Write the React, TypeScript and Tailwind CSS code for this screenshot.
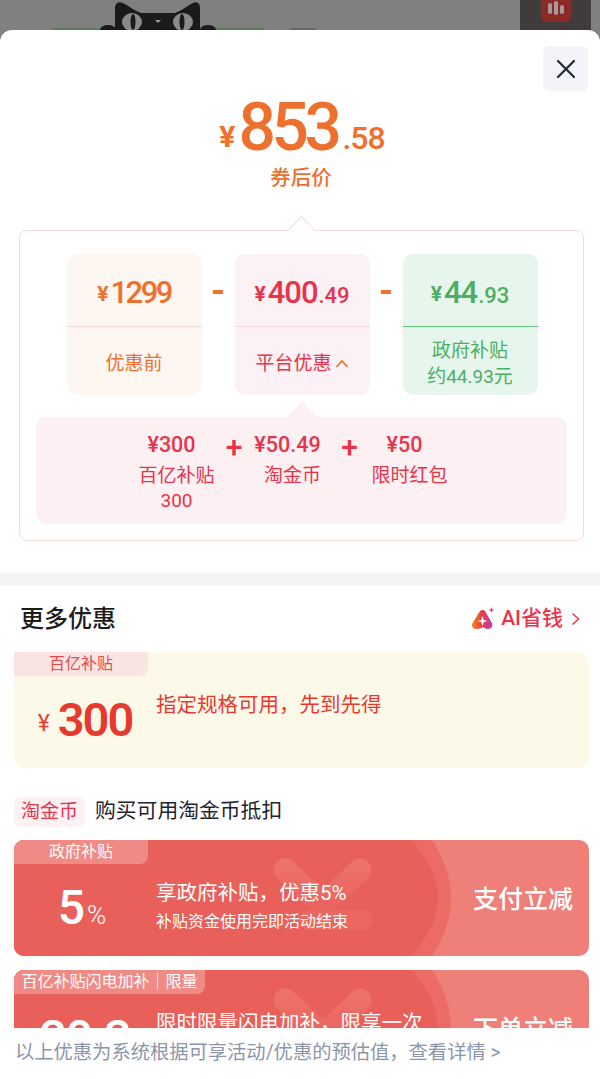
import React from "react";

const cjk = "font-['Roboto','Noto_Sans_CJK_SC',sans-serif]";

const Cat = () => (
  <svg className="absolute left-[100px] top-0" width="116" height="30" viewBox="0 0 116 30">
    <path d="M15 30V8C15 3 19 1 23 3C29 6 35 11 41 13H75C81 11 87 6 93 3C97 1 100 3 100 8V30Z" fill="#1a1a1a" />
    <ellipse cx="8" cy="30" rx="8" ry="5" fill="#1a1a1a" />
    <ellipse cx="108" cy="30" rx="8" ry="5" fill="#1a1a1a" />
    <ellipse cx="32" cy="22" rx="10" ry="9" fill="#8a8a8a" />
    <ellipse cx="83" cy="22" rx="10" ry="9" fill="#8a8a8a" />
    <ellipse cx="33" cy="22" rx="2.5" ry="8" fill="#1a1a1a" />
    <ellipse cx="82" cy="22" rx="2.5" ry="8" fill="#1a1a1a" />
    <path d="M55 20H61L58 23Z" fill="#999" />
  </svg>
);

const PriceCard = ({
  bg,
  line,
  color,
  int,
  dec,
  children,
}: {
  bg: string;
  line: string;
  color: string;
  int: string;
  dec?: string;
  children: React.ReactNode;
}) => (
  <div className={`w-[135px] h-[141px] rounded-[10px] flex flex-col ${bg} ${color}`}>
    <div className={`h-[73px] shrink-0 border-b flex items-center justify-center pt-[6px] ${line}`}>
      <span className="text-[21px] font-bold mr-[2px] mt-[4px]">¥</span>
      <span className={`text-[31px] font-medium ${dec ? "tracking-[-1px]" : "tracking-[-2.5px]"}`}>{int}</span>
      {dec && <span className="text-[22px] font-medium mt-[4px] ml-px">{dec}</span>}
    </div>
    <div className="flex-1 flex flex-col items-center justify-center text-[19px] leading-[26px] pt-[5px]">{children}</div>
  </div>
);

const Sub = ({ price, label, sub, w }: { price: string; label: string; sub?: string; w: string }) => (
  <div className={`flex flex-col items-center ${w}`}>
    <span className="text-[21.5px] font-medium leading-[26px] pr-[10px]">¥{price}</span>
    <span className="text-[19px] leading-[28px] mt-[4px]">{label}</span>
    {sub && <span className="text-[19px] leading-[21px]">{sub}</span>}
  </div>
);

const Dash = () => <div className="w-[33px] text-center text-[36px] font-bold text-[#ee702e] leading-[74px]">-</div>;

const Watermark = () => (
  <svg className="absolute left-0 top-0 pointer-events-none" width="575" height="116" viewBox="0 0 575 116">
    <defs>
      <linearGradient id="wm" gradientUnits="userSpaceOnUse" x1="0" y1="20" x2="0" y2="80">
        <stop offset="0" stopColor="#ed736b" />
        <stop offset="1" stopColor="#e9605a" />
      </linearGradient>
    </defs>
    <path d="M0 0H418Q456 58 418 116H0Z" fill="#ec6c65" />
    <path d="M0 0H397Q451 58 397 116H0Z" fill="#e9605a" />
    <path d="M271 30L309 65L346 30" fill="none" stroke="url(#wm)" strokeWidth="23" strokeLinecap="round" strokeLinejoin="round" />
    <path d="M295 80H349" fill="none" stroke="#eb6860" strokeWidth="20" strokeLinecap="round" />
  </svg>
);

const Tag = ({ children, w, cls }: { children: React.ReactNode; w: string; cls: string }) => (
  <div className={`absolute left-0 top-0 h-[24px] ${w} ${cls} rounded-br-[8px] text-[16px] leading-[24px] text-center`}>{children}</div>
);

const RedCoupon = ({
  tag,
  tagW,
  left,
  title,
  sub,
  action,
}: {
  tag: string;
  tagW: string;
  left: React.ReactNode;
  title: string;
  sub?: string;
  action: string;
}) => (
  <div className="relative h-[116px] shrink-0 rounded-[10px] overflow-hidden bg-[#ef7f79] text-white">
    <Watermark />
    <Tag w={tagW} cls="bg-[#ef8a84]">{tag}</Tag>
    <div className="relative flex h-full">
      <div className="w-[142px] shrink-0 flex items-end justify-center pb-[20px]">{left}</div>
      <div className="flex-1 pt-[39px]">
        <div className="text-[20.5px] leading-[28px]">{title}</div>
        {sub && <div className="text-[16px] leading-[24px] mt-[3px]">{sub}</div>}
      </div>
      <div className="w-[116px] shrink-0 pt-[42px] text-[25px] leading-[36px] font-medium">{action}</div>
    </div>
  </div>
);

export default function App() {
  return (
    <div className={`h-[1079px] w-[600px] overflow-hidden flex flex-col bg-[#808080] ${cjk}`}>
      {/* dimmed page behind the sheet */}
      <div className="relative h-[30px] shrink-0 flex items-end">
        <Cat />
        <div className="ml-[52px] w-[212px] h-[2px] bg-[#5c7a5c]" />
        <div className="ml-[26px] w-[26px] h-[2px] rounded-t-full bg-[#666]" />
        <div className="ml-auto mr-[9px] w-[71px] h-full bg-[#403c3c] flex justify-center">
          <div className="w-[30px] h-[22px] rounded-b-[6px] bg-[#8c2a25] flex items-start justify-center gap-[2px] pt-[1px]">
            <div className="w-[4px] h-[11px] mt-[2px] rounded-full bg-[#a99]" />
            <div className="w-[4px] h-[14px] rounded-full bg-[#a99]" />
            <div className="w-[4px] h-[9px] mt-[4px] rounded-full bg-[#a99]" />
          </div>
        </div>
      </div>

      {/* sheet */}
      <div className="flex-1 min-h-0 bg-white rounded-t-[12px] flex flex-col">
        <div className="flex-1 min-h-0 overflow-hidden">
          <div className="relative pt-[64px] flex flex-col items-center text-[#ee702e]">
            <button className="absolute right-[12px] top-[16px] w-[45px] h-[45px] rounded-[6px] bg-[#f2f4f7] flex items-center justify-center">
              <svg width="20" height="20" viewBox="0 0 20 20" fill="none" stroke="#1f2937" strokeWidth="2.2" strokeLinecap="round">
                <path d="M2 2L18 18M18 2L2 18" />
              </svg>
            </button>
            <div className="flex items-end h-[68px] leading-none pl-[4px]">
              <span className="text-[30px] font-bold mb-[3px] mr-[3px] leading-[44px]">¥</span>
              <span className="text-[66px] font-medium tracking-[-4.5px] leading-[68px]">853</span>
              <span className="text-[32px] font-medium tracking-[-1px] ml-[5px] mb-[2px] leading-[44px]">.58</span>
            </div>
            <div className="text-[20.5px] font-medium leading-[28px] mt-[2px] pl-[2px]">券后价</div>
          </div>

          {/* price breakdown */}
          <div className="relative ml-[19px] mr-[16px] mt-[38px] h-[311px] border border-[#f8dadd] rounded-[8px] px-[16px]">
            <div className="absolute left-[272px] top-[-11px] w-[19px] h-[19px] rotate-45 bg-white border-l border-t border-[#f8dadd]" />
            <div className="flex justify-center mt-[23px] pl-px">
              <PriceCard bg="bg-[#fef6f1]" line="border-[#f7d5d5]" color="text-[#ee702e]" int="1299">
                <span>优惠前</span>
              </PriceCard>
              <Dash />
              <PriceCard bg="bg-[#fcf1f5]" line="border-[#f7d5dc]" color="text-[#e8344a]" int="400" dec=".49">
                <span className="flex items-center">
                  平台优惠
                  <svg className="ml-[3px]" width="14" height="9" viewBox="0 0 14 9" fill="none" stroke="#ee702e" strokeWidth="1.6">
                    <path d="M1.5 8L7 2L12.5 8" />
                  </svg>
                </span>
              </PriceCard>
              <Dash />
              <PriceCard bg="bg-[#e7f6ec]" line="border-[#66c07a]" color="text-[#4cae62]" int="44" dec=".93">
                <span>政府补贴</span>
                <span>约44.93元</span>
              </PriceCard>
            </div>

            <div className="relative mt-[22px] h-[107px] rounded-[10px] bg-[#fdf0f3] text-[#e8344a] flex justify-center pt-[15px]">
              <div className="absolute left-[255px] top-[-11px] w-[22px] h-[22px] rotate-45 bg-[#fdf0f3]" />
              <div className="relative flex items-start ml-[-13px]">
                <Sub price="300" label="百亿补贴" sub="300" w="w-[80px]" />
                <span className="w-[35px] text-center text-[30px] leading-[30px] font-medium">+</span>
                <Sub price="50.49" label="淘金币" w="w-[82px]" />
                <span className="w-[32px] text-center text-[30px] leading-[30px] font-medium">+</span>
                <Sub price="50" label="限时红包" w="w-[88px]" />
              </div>
            </div>
          </div>

          <div className="h-[13px] mt-[32px] bg-[#f2f4f5]" />

          {/* more offers */}
          <div className="pl-[14px] pr-[11px]">
            <div className="flex items-center justify-between h-[66px] pl-[6px] pr-[9px]">
              <span className="text-[24px] font-medium text-[#1c1c1c]">更多优惠</span>
              <span className="flex items-center text-[#e8344a] text-[21px] font-medium">
                <svg className="mr-[5px]" width="25" height="24" viewBox="0 0 25 24">
                  <defs>
                    <linearGradient id="ai" x1="0" y1="0" x2="1" y2="0">
                      <stop offset="0" stopColor="#f08a1d" />
                      <stop offset="0.5" stopColor="#ea3b4a" />
                      <stop offset="1" stopColor="#b83fc0" />
                    </linearGradient>
                  </defs>
                  <path d="M9 4C10 2.5 13 2.5 14 4L21 16C22.5 19 20 22 17 22C15 22 13.5 21 12 20C10.5 21 8 22 5 22C2 22 0 19 1.5 16Z" fill="url(#ai)" />
                  <path d="M11.5 9L12.8 13L16.5 14L12.8 15L11.5 19L10.2 15L6.5 14L10.2 13Z" fill="#fff" />
                  <path d="M20.5 0L21.3 2.2L23.5 3L21.3 3.8L20.5 6L19.7 3.8L17.5 3L19.7 2.2Z" fill="#c64aa8" />
                </svg>
                AI省钱
                <svg className="ml-[8px]" width="9" height="14" viewBox="0 0 9 14" fill="none" stroke="#e8344a" strokeWidth="1.5">
                  <path d="M1.5 1.5L7.5 7L1.5 12.5" />
                </svg>
              </span>
            </div>

            <div className="relative h-[116px] rounded-[10px] bg-[#fdf9e9] text-[#e8392f] flex">
              <Tag w="w-[134px]" cls="bg-[#f9e4e2] text-[#e8494a]">百亿补贴</Tag>
              <div className="w-[142px] shrink-0 flex items-end justify-center pb-[20px]">
                <span className="text-[23px] mr-[8px] mb-[7px]">¥</span>
                <span className="text-[47px] leading-[56px] font-semibold tracking-[-2px]">300</span>
              </div>
              <div className="pt-[39px] text-[20.5px] leading-[28px]">指定规格可用，先到先得</div>
            </div>

            <div className="flex items-center mt-[29px] h-[30px]">
              <span className="h-[30px] px-[7px] rounded-[6px] bg-[#fdf1f3] text-[#e8344a] text-[19px] leading-[30px]">淘金币</span>
              <span className="ml-[10px] text-[20.8px] text-[#1f2430]">购买可用淘金币抵扣</span>
            </div>

            <div className="flex flex-col gap-[14px] mt-[13px]">
              <RedCoupon
                tag="政府补贴"
                tagW="w-[134px]"
                left={
                  <span className="flex items-baseline pr-[6px]">
                    <span className="text-[48px] leading-[56px] font-medium">5</span>
                    <span className="text-[26px] font-light ml-[2px]">%</span>
                  </span>
                }
                title="享政府补贴，优惠5%"
                sub="补贴资金使用完即活动结束"
                action="支付立减"
              />
              <RedCoupon
                tag="百亿补贴闪电加补｜限量"
                tagW="w-[191px]"
                left={<span className="text-[48px] leading-[56px] font-medium tracking-[-1px]">20.3</span>}
                title="限时限量闪电加补，限享一次"
                action="下单立减"
              />
            </div>
          </div>
        </div>

        <div className="h-[51px] shrink-0 bg-white pl-[15px] pt-[9px] text-[19.3px] leading-[32px] text-[#8c96a8]">
          以上优惠为系统根据可享活动/优惠的预估值，查看详情 &gt;
        </div>
      </div>
    </div>
  );
}
